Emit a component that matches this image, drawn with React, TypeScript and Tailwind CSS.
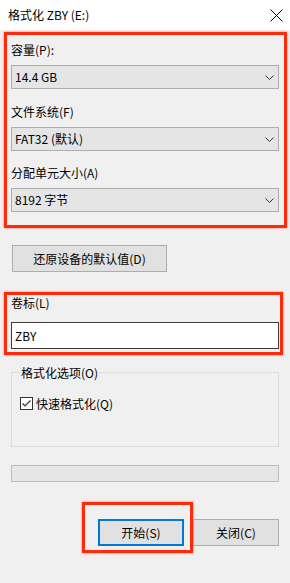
import React from 'react';

const Chevron = () => (
  <svg width="9" height="5" viewBox="0 0 9 5" className="block">
    <path d="M0.5 0.5 L4.5 4.5 L8.5 0.5" fill="none" stroke="#333" strokeWidth="1" />
  </svg>
);

const Dropdown: React.FC<{ value: string }> = ({ value }) => (
  <div className="h-[24px] border border-[#adadad] bg-[#e5e5e5] flex items-center justify-between pl-[3px] pr-[4px]">
    <span className="leading-none">{value}</span>
    <Chevron />
  </div>
);

const Label: React.FC<{ text: string }> = ({ text }) => (
  <div className="h-5 leading-5 mb-[5px]">{text}</div>
);

export default function App() {
  return (
    <div className="w-[290px] h-[583px] bg-[#f0f0f0] overflow-hidden text-[12px] text-black font-['Noto_Sans_CJK_SC','Noto_Sans',sans-serif]">
      {/* title bar */}
      <div className="h-[30px] bg-white flex items-center justify-between pl-2 pr-[7px]">
        <span className="leading-none">格式化 ZBY (E:)</span>
        <svg width="13" height="13" viewBox="0 0 13 13" className="block">
          <path d="M0.5 0.5 L12.5 12.5 M12.5 0.5 L0.5 12.5" stroke="#000" strokeWidth="1" />
        </svg>
      </div>

      <div className="px-[11px]">
        {/* capacity / fs / unit size */}
        <div className="mt-[2px] -ml-[7px] -mr-[8px] border-[3px] border-[#ff2a0a] shadow-[0_0_2px_#ff6a4a] pt-[5px] pl-[4px] pr-[5px] pb-[13px]">
          <Label text="容量(P):" />
          <Dropdown value="14.4 GB" />
          <div className="mt-[13px]">
            <Label text="文件系统(F)" />
            <Dropdown value="FAT32 (默认)" />
          </div>
          <div className="mt-[12px]">
            <Label text="分配单元大小(A)" />
            <Dropdown value="8192 字节" />
          </div>
        </div>

        <button className="mt-[17px] ml-[1px] w-[155px] h-[27px] border border-[#adadad] bg-[#e1e1e1] flex items-center justify-center">
          还原设备的默认值(D)
        </button>

        {/* volume label */}
        <div className="mt-[20px] -ml-[7px] -mr-[4px] border-[3px] border-[#ff2a0a] shadow-[0_0_2px_#ff6a4a] pl-[4px] pr-[1px] pb-[3px]">
          <div className="h-4 leading-4">卷标(L)</div>
          <div className="mt-[11px] h-[27px] border border-[#3c3c3c] bg-white flex items-center pl-[3px]">
            ZBY
          </div>
        </div>

        {/* format options */}
        <div className="relative mt-[17px] h-[75px] border border-[#dcdcdc] pt-[24px] pl-[8px]">
          <span className="absolute left-[8px] top-[-8px] h-4 leading-4 px-[1px] bg-[#f0f0f0]">格式化选项(O)</span>
          <div className="flex items-center h-[13px]">
            <div className="w-[13px] h-[13px] border border-[#333] bg-white flex items-center justify-center">
              <svg width="11" height="11" viewBox="0 0 11 11" className="block">
                <path d="M1.5 5.5 L4 8 L9.5 2.5" fill="none" stroke="#333" strokeWidth="1.2" />
              </svg>
            </div>
            <span className="ml-[3px] leading-none">快速格式化(Q)</span>
          </div>
        </div>

        {/* progress */}
        <div className="mt-[18px] h-[17px] border border-[#bcbcbc] bg-[#e6e6e6]" />

        {/* buttons */}
        <div className="mt-[20px] flex justify-end items-start">
          <div className="border-[3px] border-[#ff2a0a] shadow-[0_0_2px_#ff6a4a] pl-[13px] pr-[6px] pt-[14px] pb-[4px]">
            <button className="w-[86px] h-[27px] border-2 border-[#0078d7] bg-[#e1e1e1] flex items-center justify-center">
              开始(S)
            </button>
          </div>
          <button className="mt-[17px] w-[86px] h-[27px] border border-[#adadad] bg-[#e1e1e1] flex items-center justify-center">
            关闭(C)
          </button>
        </div>
      </div>
    </div>
  );
}
